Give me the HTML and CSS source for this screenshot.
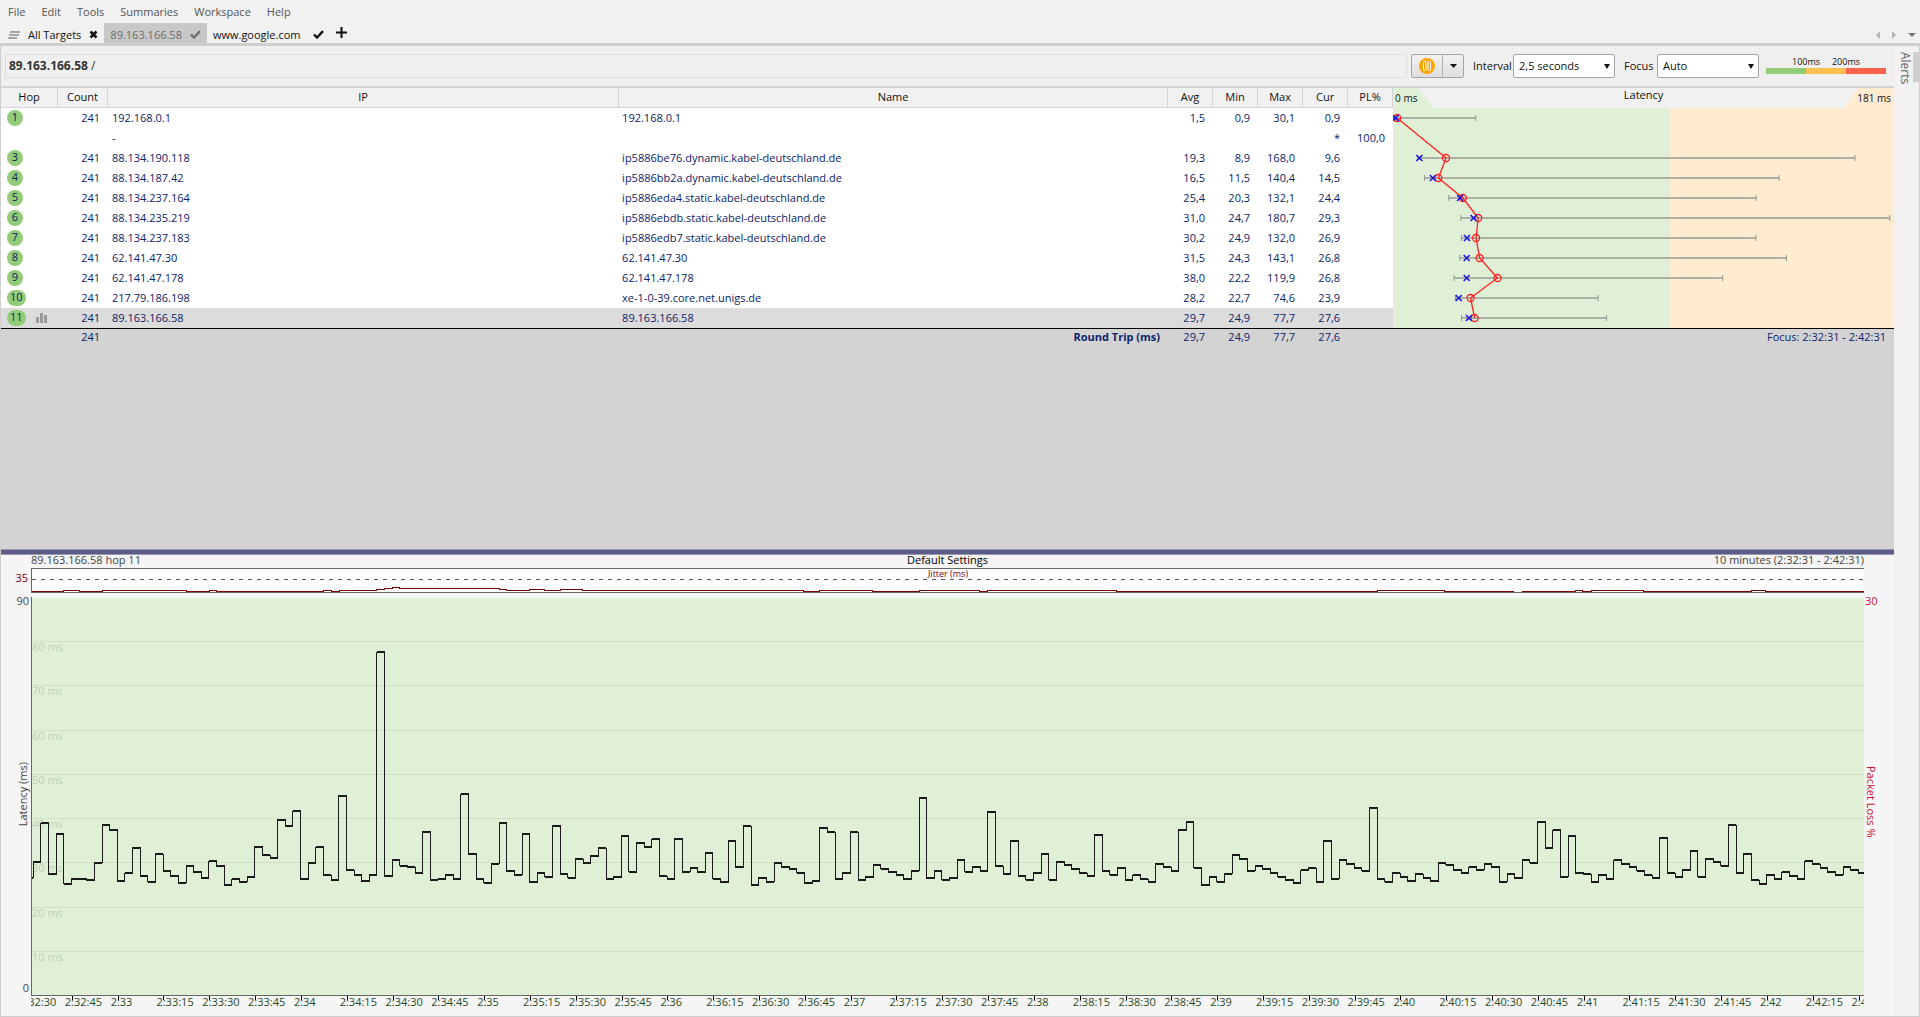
FILE: index.html
```html
<!DOCTYPE html>
<html lang="en">
<head>
<meta charset="utf-8">
<title>89.163.166.58</title>
<link rel="stylesheet" href="styles.css">
</head>
<body>
<nav class="menu">
  <button>File</button><button>Edit</button><button>Tools</button><button>Summaries</button><button>Workspace</button><button>Help</button>
</nav>
<div class="tabs">
  <button class="tab tab-all">
    <svg width="12" height="8" viewBox="0 0 12 8"><path d="M2 1h10M1 4h10M0 7h9" stroke="#8a8a8a" stroke-width="1.6"/></svg>
    All Targets
    <svg width="9" height="9" viewBox="0 0 9 9"><path d="M1.5 1.5l6 6M7.500 1.500l-6 6" stroke="#111" stroke-width="2.600"/></svg>
  </button>
  <button class="tab tab-active">89.163.166.58
    <svg width="11" height="9" viewBox="0 0 11 9"><path d="M1 4.500L4 7.500L10 1.200" fill="none" stroke="#6c6c6c" stroke-width="2.400"/></svg>
  </button>
  <button class="tab tab-web">www.google.com
    <svg width="11" height="9" viewBox="0 0 11 9"><path d="M1 4.500L4 7.500L10 1.200" fill="none" stroke="#111" stroke-width="2.400"/></svg>
  </button>
  <button class="add" aria-label="Add target"><svg width="11" height="11" viewBox="0 0 11 11"><path d="M5.500 0v11M0 5.500h11" stroke="#111" stroke-width="2"/></svg></button>
  <span class="scrollers">
    <svg width="4" height="8" viewBox="0 0 4 8"><path d="M4 0v8L0 4z" fill="#b5b5b5"/></svg>
    <svg width="4" height="8" viewBox="0 0 4 8"><path d="M0 0v8l4-4z" fill="#b5b5b5"/></svg>
    <svg width="8" height="4" viewBox="0 0 8 4"><path d="M0 0h8L4 4z" fill="#777"/></svg>
  </span>
</div>
<div class="workarea">
  <main class="content">
    <div class="toolbar">
      <div class="crumb"><b>89.163.166.58</b>&nbsp;/</div>
      <div class="split">
        <button class="pause" aria-label="Pause"><svg width="16" height="16" viewBox="0 0 16 16"><circle cx="8" cy="8" r="8" fill="#ffa500"/><rect x="4.500" y="3.500" width="2.500" height="9" rx="1" fill="none" stroke="#fff"/><rect x="9" y="3.500" width="2.500" height="9" rx="1" fill="none" stroke="#fff"/></svg></button>
        <button class="more" aria-label="More"><svg width="7" height="4" viewBox="0 0 7 4"><path d="M0 0h7L3.500 4z" fill="#111"/></svg></button>
      </div>
      <label for="interval">Interval</label>
      <span class="pick"><select id="interval"><option>2,5 seconds</option></select></span>
      <label for="focus" class="gap">Focus</label>
      <span class="pick"><select id="focus"><option>Auto</option></select></span>
      <div class="legend">
        <div class="legend-text"><span>100ms</span><span>200ms</span></div>
        <div class="legend-bar"><i class="good"></i><i class="warn"></i><i class="bad"></i></div>
      </div>
    </div>
    <section class="hops">
      <table>
        <colgroup><col class="c-hop"><col class="c-count"><col class="c-ip"><col class="c-name"><col class="c-num"><col class="c-num"><col class="c-num"><col class="c-num"><col class="c-num"><col></colgroup>
        <thead><tr><th>Hop</th><th>Count</th><th>IP</th><th>Name</th><th>Avg</th><th>Min</th><th>Max</th><th>Cur</th><th>PL%</th><th class="lat-head"><div class="lat-bar"><span class="zero">0 ms</span><span>Latency</span><span class="top">181 ms</span></div></th></tr></thead>
        <tbody id="rows">
          <tr><td><span class="hop">1</span></td><td>241</td><td>192.168.0.1</td><td>192.168.0.1</td><td>1,5</td><td>0,9</td><td>30,1</td><td>0,9</td><td></td><td rowspan="11" class="lat"><svg id="latency" viewBox="0 0 501 220" preserveAspectRatio="none"></svg></td></tr>
          <tr><td></td><td></td><td>-</td><td></td><td></td><td></td><td></td><td>*</td><td>100,0</td></tr>
          <tr><td><span class="hop">3</span></td><td>241</td><td>88.134.190.118</td><td>ip5886be76.dynamic.kabel-deutschland.de</td><td>19,3</td><td>8,9</td><td>168,0</td><td>9,6</td><td></td></tr>
          <tr><td><span class="hop">4</span></td><td>241</td><td>88.134.187.42</td><td>ip5886bb2a.dynamic.kabel-deutschland.de</td><td>16,5</td><td>11,5</td><td>140,4</td><td>14,5</td><td></td></tr>
          <tr><td><span class="hop">5</span></td><td>241</td><td>88.134.237.164</td><td>ip5886eda4.static.kabel-deutschland.de</td><td>25,4</td><td>20,3</td><td>132,1</td><td>24,4</td><td></td></tr>
          <tr><td><span class="hop">6</span></td><td>241</td><td>88.134.235.219</td><td>ip5886ebdb.static.kabel-deutschland.de</td><td>31,0</td><td>24,7</td><td>180,7</td><td>29,3</td><td></td></tr>
          <tr><td><span class="hop">7</span></td><td>241</td><td>88.134.237.183</td><td>ip5886edb7.static.kabel-deutschland.de</td><td>30,2</td><td>24,9</td><td>132,0</td><td>26,9</td><td></td></tr>
          <tr><td><span class="hop">8</span></td><td>241</td><td>62.141.47.30</td><td>62.141.47.30</td><td>31,5</td><td>24,3</td><td>143,1</td><td>26,8</td><td></td></tr>
          <tr><td><span class="hop">9</span></td><td>241</td><td>62.141.47.178</td><td>62.141.47.178</td><td>38,0</td><td>22,2</td><td>119,9</td><td>26,8</td><td></td></tr>
          <tr><td><span class="hop">10</span></td><td>241</td><td>217.79.186.198</td><td>xe-1-0-39.core.net.unigs.de</td><td>28,2</td><td>22,7</td><td>74,6</td><td>23,9</td><td></td></tr>
          <tr class="selected"><td><span class="hop">11</span><svg class="bars" width="11" height="10" viewBox="0 0 11 10"><path d="M0 4h3v6H0zM4 0h3v10H4zM8 2h3v8H8z" fill="#999"/></svg></td><td>241</td><td>89.163.166.58</td><td>89.163.166.58</td><td>29,7</td><td>24,9</td><td>77,7</td><td>27,6</td><td></td></tr>
        </tbody>
        <tfoot><tr><td></td><td>241</td><td></td><td class="round">Round Trip (ms)</td><td>29,7</td><td>24,9</td><td>77,7</td><td>27,6</td><td></td><td>Focus: 2:32:31 - 2:42:31</td></tr></tfoot>
      </table>
    </section>
    <div class="splitter"></div>
    <section class="timeline">
      <header class="tl-head"><span>89.163.166.58 hop 11</span><span class="tl-title">Default Settings</span><span>10 minutes (2:32:31 - 2:42:31)</span></header>
      <div class="jit-max">35</div>
      <div class="jitter">
        <span>Jitter (ms)</span>
        <svg viewBox="94 88 5499 68" preserveAspectRatio="none">
          <path class="dash" d="M94 119H5593"/>
          <path class="jit" d="M94 154H190V151H236V154H307V151H557V154H626V151H647V154H970V151H992V154H1016V151H1129V148H1153V145H1177V142H1196V145H1496V148H1517V151H1588V148H1631V151H1681V148H1747V151H2410V154H2458V151H2618V154H2758V151H2938V154H2962V151H3350V154H4132V151H4334V154H4542M4566 154H4726V151H4748V154H4774V151H4930V154H5254V151H5296V154H5593"/>
        </svg>
      </div>
      <div class="scale-left"><span>90</span><span class="vertical up">Latency (ms)</span><span>0</span></div>
      <div class="plot">
        <div class="band"></div><div class="band">80 ms</div><div class="band">70 ms</div><div class="band">60 ms</div><div class="band">50 ms</div><div class="band">40 ms</div><div class="band">30 ms</div><div class="band">20 ms</div><div class="band">10 ms</div>
        <svg id="trace" viewBox="94 171 5499 1194" preserveAspectRatio="none"></svg>
      </div>
      <div class="scale-right"><span>30</span><span class="vertical">Packet Loss %</span><span></span></div>
      <div class="times" id="times"></div>
    </section>
  </main>
  <aside class="side"><button class="vertical">Alerts</button><i class="grip"></i></aside>
</div>
<script src="script.js"></script>
</body>
</html>
```
FILE: styles.css
```css
* { box-sizing: border-box; }
body {
  margin: 0;
  height: 100vh;
  display: flex;
  flex-direction: column;
  background: #f1f1f1;
  color: #111;
  font: 11px/14px "Open Sans", "Noto Sans", sans-serif;
  overflow: hidden;
}
button, select { font: inherit; color: inherit; border: 0; padding: 0; margin: 0; background: none; }
svg { display: block; flex: none; }

.menu { display: flex; height: 23px; padding-left: 8px; gap: 16px; align-items: center; color: #555; }
.tabs { display: flex; height: 20px; align-items: stretch; }
.tab { display: flex; align-items: center; gap: 8px; padding: 3px 6px 0; }
.tab-all { padding-left: 8px; }
.tab-web { gap: 12px; }
.tab-active { background: #c8c8c8; color: #6c6c6c; }
.add { padding: 0 6px 2px; }
.scrollers { margin-left: auto; display: flex; align-items: center; gap: 12px; padding: 4px 4px 0 0; }

.workarea { flex: 1; display: flex; min-height: 0; border: solid #cfcfcf; border-width: 3px 1px 1px; }
.content { flex: 1; min-width: 0; display: flex; flex-direction: column; }

.toolbar { display: flex; height: 42px; flex: none; align-items: center; padding: 0 8px 0 4px; background: #efefef; border-bottom: 2px solid #d3d3d3; font-size: 12px; }
.crumb { flex: 1; height: 24px; line-height: 22px; padding-left: 3px; border: 1px solid #e0e0e0; color: #333; }
.split { display: flex; height: 24px; width: 53px; margin: 0 9px 0 4px; border: 1px solid #a6a6a6; border-radius: 2px; background: linear-gradient(#f2f2f2, #dedede); }
.split button { flex: 1; display: flex; align-items: center; justify-content: center; }
.split .pause { flex: 0 0 31px; border-right: 1px solid #b0b0b0; }
.toolbar label { width: 40px; font-size: 11px; }
.toolbar .gap { width: 33px; margin-left: 9px; }
.pick { position: relative; width: 102px; height: 24px; }
.pick select { appearance: none; width: 100%; height: 100%; padding-left: 5px; background: #fff; border: 1px solid #a6a6a6; border-radius: 2px; font-size: 11px; }
.pick::after { content: ""; position: absolute; right: 5px; top: 10px; border: solid transparent; border-width: 5px 3px 0; border-top-color: #111; }
.legend { width: 120px; margin-left: 7px; padding-bottom: 2px; }
.legend-text { display: flex; justify-content: space-between; padding: 0 26px; font-size: 9px; line-height: 12px; }
.legend-bar { display: flex; height: 6px; }
.legend-bar i { flex: 1; }
.good { background: #92cc76; }
.warn { background: #ffc04f; }
.bad { background: #ff624c; }

.hops { flex: 1 1 0; min-height: 0; background: #d3d3d3; }
table { width: 100%; table-layout: fixed; border-collapse: separate; border-spacing: 0; }
.c-hop { width: 57px; }
.c-count { width: 50px; }
.c-ip { width: 27%; }
.c-name { width: 29%; }
.c-num { width: 45px; }
th { height: 20px; padding: 0 0 2px; background: #f1f1f1; border: solid #d3d3d3; border-width: 0 1px 1px 0; font-weight: normal; }
.lat-head { border: 0; padding: 0; }
.lat-bar { display: flex; justify-content: space-between; height: 20px; line-height: 14px; }
.zero, .top { font-size: 10px; line-height: 20px; }
.zero { width: 50px; padding-left: 2px; text-align: left; background: #dff0d6; clip-path: polygon(0 0, 25px 0, 40px 100%, 0 100%); }
.top { width: 50px; padding-right: 3px; text-align: right; background: #ffebcf; clip-path: polygon(14px 0, 100% 0, 100% 100%, 0 100%); }
td { height: 20px; padding: 0 8px 0 4px; color: #0a246a; text-align: right; white-space: nowrap; }
tbody td { background: #fff; }
td:nth-child(3), td:nth-child(4) { text-align: left; }
td:nth-child(4) { padding-left: 3px; }
td:first-child { text-align: left; padding-left: 6px; }
.selected td { background: #dcdcdc; }
tbody .lat { padding: 0; background: linear-gradient(90deg, #dff0d6 277px, #ffebcf 277px); }
.lat svg { width: 100%; height: 220px; }
.hop { display: inline-block; min-width: 16px; height: 16px; padding: 0 3px; border-radius: 8px; background: #92cc76; text-align: center; }
.bars { display: inline-block; margin-left: 10px; vertical-align: -2px; }
tfoot td { height: 17px; border-top: 1px solid #000; }
tfoot .round { text-align: right; font-weight: bold; }
.range { stroke: #acb0a6; stroke-width: 2; }
.cap { stroke: #959a90; stroke-width: 1; }
.avg { fill: none; stroke: #f22; stroke-width: 1.3; }
.cur { stroke: #11e; stroke-width: 1.5; }

.splitter { flex: none; height: 6px; background: #5c5c88; border: solid #9a9aae; border-width: 1px 0; }
.timeline { flex: 1 1 0; min-height: 0; display: grid; grid-template: 13px 25px 1fr 20px / 30px 1fr 30px; background: #f5f5f5; }
.tl-head { grid-column: 2; display: flex; justify-content: space-between; line-height: 10px; color: #444; }
.tl-head span { flex: 1; }
.tl-title { text-align: center; color: #000; }
.tl-head span:last-child { text-align: right; }
.jit-max { grid-row: 2; text-align: right; padding: 3px 3px 0 0; color: #7d0012; }
.jitter { grid-area: 2 / 2; position: relative; background: #fdfdfd; border: solid #666; border-width: 1px 0 1px 1px; text-align: center; color: #7d0012; font-size: 9px; line-height: 10px; }
.jitter svg, .plot svg { position: absolute; inset: 0; width: 100%; height: 100%; }
.jitter path, .plot path { fill: none; vector-effect: non-scaling-stroke; shape-rendering: crispEdges; }
.dash { stroke: #555; stroke-dasharray: 4 5; }
.jit { stroke: #7d0000; }
.plot { grid-area: 3 / 2; position: relative; margin-top: 4px; display: flex; flex-direction: column; border: solid #666; border-width: 0 0 1px 1px; background: #dff0d6; color: #bfd0b8; }
.band { flex: 1 1 0; border-top: 1px solid #cfe0c7; line-height: 10px; }
.band:first-child { border-top-color: #f5f5f5; }
.flat { stroke: #1a1a1a; stroke-width: 2; }
.rise { stroke: #1a1a1a; stroke-width: 1; }
.scale-left, .scale-right { display: flex; flex-direction: column; justify-content: space-between; margin-top: 2px; line-height: 12px; }
.scale-left { grid-area: 3 / 1; align-items: flex-end; padding: 0 2px 2px 0; color: #444; }
.scale-right { grid-area: 3 / 3; align-items: flex-start; padding-left: 1px; color: #c4122f; }
.vertical { writing-mode: vertical-rl; }
.up { transform: rotate(180deg); }
.times { grid-area: 4 / 2; display: flex; overflow: hidden; color: #1f4a1f; line-height: 12px; }
.times span { position: relative; flex: 0 0 2.5%; white-space: nowrap; }
.times span:first-child { margin-left: -12px; }
.times span::before { content: ""; position: absolute; left: 7px; top: 0; height: 4px; border-left: 1px solid #000; }
.side { flex: none; width: 25px; display: flex; justify-content: space-between; align-items: flex-start; padding: 6px 0 0 4px; color: #666; font-size: 12px; }
.grip { width: 6px; height: 30px; background: #cfcfcf; }
```
FILE: script.js
```js
// Trace height of every 2.5 s sample, in plot units from the top.
const samples = [
  966,849,1001,882,1031,1017,1017,1020,969,855,870,1022,999,924,1008,1026,942,993,1008,1029,
  978,996,1014,963,978,1035,1017,1026,1011,921,945,954,840,858,813,1017,969,921,1005,1020,
  768,990,1005,1023,1005,336,1008,960,978,981,999,876,1020,1017,1005,1017,762,942,1017,1029,
  972,849,993,1005,882,1026,999,1011,858,1002,1014,957,969,948,924,1017,1011,888,996,909,
  921,897,1008,1017,897,996,984,996,939,1017,1026,903,981,858,1035,1014,1026,969,981,987,
  999,1029,1023,864,876,1017,999,876,1020,1011,975,987,996,1005,1017,993,774,1014,993,1020,
  1014,960,996,981,993,816,978,1002,903,1008,1020,999,942,1020,966,975,987,999,1008,885,
  993,1005,984,1020,1005,1017,1026,972,981,993,870,846,984,1035,1011,1026,1002,945,957,993,
  978,987,999,1011,1020,1029,990,984,1026,903,1017,960,972,984,993,804,1017,1026,999,1011,
  1023,1002,1014,1023,969,975,990,999,981,990,972,981,1026,1002,1014,960,969,846,924,870,
  1011,888,999,1002,1026,1005,1017,960,972,981,993,1005,1014,894,999,1011,990,933,1011,957,
  966,978,855,999,942,1020,1032,1005,1017,996,1008,1017,963,972,984,996,1005,981,990,999
];
const step = 22.92;
let flat = 'M94 1014H98';
let rise = '';
let previous = 1014;
samples.forEach((y, i) => {
  const x = 98 + i * step;
  flat += `M${x - 1} ${y}H${x + step + 1}`;
  rise += `M${x} ${previous}V${y}`;
  previous = y;
});
document.getElementById('trace').innerHTML =
  `<path class="flat" d="${flat}"/><path class="rise" d="${rise}"/>`;

// Time labels every 15 seconds from 2:32:30.
let labels = '';
for (let s = 0; s <= 600; s += 15) {
  const t = 32 * 60 + 30 + s;
  const sec = t % 60;
  labels += `<span>2:${Math.floor(t / 60)}${sec ? ':' + sec : ''}</span>`;
}
document.getElementById('times').innerHTML = labels;

// Range, average and current markers for each hop, read from the table.
const perMs = 2.75;
let ranges = '', marks = '', line = '';
[...document.getElementById('rows').rows].forEach((row, i) => {
  const [avg, min, max, cur] = [4, 5, 6, 7].map(c => parseFloat(row.cells[c].textContent.replace(',', '.')) * perMs);
  if (isNaN(avg)) return;
  const y = 10 + i * 20;
  ranges += `<path class="range" d="M${min} ${y}H${max}"/><path class="cap" d="M${min} ${y - 3}v6M${max} ${y - 3}v6"/>`;
  marks += `<circle class="avg" cx="${avg}" cy="${y}" r="3.5"/><path class="cur" d="M${cur - 3} ${y - 3}l6 6M${cur + 3} ${y - 3}l-6 6"/>`;
  line += `${avg},${y} `;
});
document.getElementById('latency').innerHTML = ranges + `<polyline class="avg" points="${line}"/>` + marks;
```
